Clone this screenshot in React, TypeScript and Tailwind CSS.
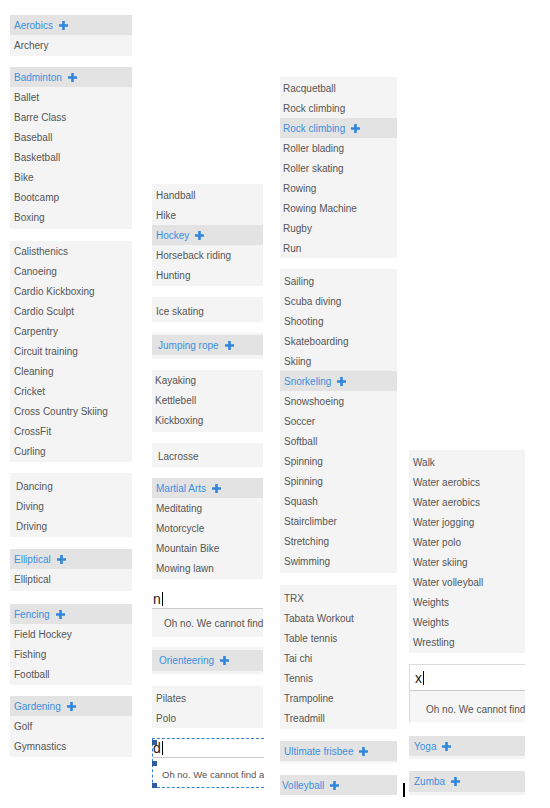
import React from "react";

const Plus = () => (
  <svg width="9" height="9" viewBox="0 0 9 9" className="shrink-0">
    <path
      d="M3.2 0h2.6v3.2H9v2.6H5.8V9H3.2V5.8H0V3.2h3.2z"
      fill="#2f86dc"
    />
  </svg>
);

const Item = ({ children, className = "px-1" }: { children: React.ReactNode; className?: string }) => (
  <div className={`flex h-5 items-center whitespace-nowrap text-[#555] ${className}`}>{children}</div>
);

const Head = ({ children, className = "px-1" }: { children: React.ReactNode; className?: string }) => (
  <div className={`flex h-5 items-center gap-[6px] whitespace-nowrap bg-[#e3e3e3] text-[#3b8fe0] ${className}`}>
    {children}
    <Plus />
  </div>
);

const Caret = () => <span className="ml-[1px] inline-block h-[14px] w-px bg-black" />;

export default function App() {
  return (
    <div className="flex h-[808px] w-[550px] overflow-hidden bg-white pl-[10px] font-['Liberation_Sans',Arial,sans-serif] text-[10px]">
      {/* COLUMN 1 */}
      <div className="flex w-[122px] flex-col">
        <div className="mt-[15px] bg-[#f4f4f4] pb-px">
          <Head>Aerobics</Head>
          <Item>Archery</Item>
        </div>
        <div className="mt-[11px] bg-[#f4f4f4] pb-[2px]">
          <Head>Badminton</Head>
          {["Ballet", "Barre Class", "Baseball", "Basketball", "Bike", "Bootcamp", "Boxing"].map((t) => (
            <Item key={t}>{t}</Item>
          ))}
        </div>
        <div className="mt-[12px] bg-[#f4f4f4] pb-px">
          {[
            "Calisthenics",
            "Canoeing",
            "Cardio Kickboxing",
            "Cardio Sculpt",
            "Carpentry",
            "Circuit training",
            "Cleaning",
            "Cricket",
            "Cross Country Skiing",
            "CrossFit",
            "Curling",
          ].map((t) => (
            <Item key={t}>{t}</Item>
          ))}
        </div>
        <div className="mt-[11px] bg-[#f4f4f4] pt-[3px] pb-px">
          {["Dancing", "Diving", "Driving"].map((t) => (
            <Item key={t} className="px-[6px]">{t}</Item>
          ))}
        </div>
        <div className="mt-[12px] bg-[#f4f4f4] pb-[2px]">
          <Head>Elliptical</Head>
          <Item>Elliptical</Item>
        </div>
        <div className="mt-[13px] bg-[#f4f4f4] pb-px">
          <Head>Fencing</Head>
          {["Field Hockey", "Fishing", "Football"].map((t) => (
            <Item key={t}>{t}</Item>
          ))}
        </div>
        <div className="mt-[11px] bg-[#f4f4f4] pb-px">
          <Head>Gardening</Head>
          <Item>Golf</Item>
          <Item>Gymnastics</Item>
        </div>
      </div>

      {/* COLUMN 2 */}
      <div className="ml-[20px] flex w-[111px] flex-col">
        <div className="mt-[184px] bg-[#f4f4f4] pt-px pb-px">
          <Item>Handball</Item>
          <Item>Hike</Item>
          <Head>Hockey</Head>
          <Item>Horseback riding</Item>
          <Item>Hunting</Item>
        </div>
        <div className="mt-[11px] bg-[#f4f4f4] pt-[4px] pb-px">
          <Item>Ice skating</Item>
        </div>
        <div className="mt-[11px] bg-[#f4f4f4] pt-[2px] pb-[4px]">
          <Head className="px-[6px]">Jumping rope</Head>
        </div>
        <div className="mt-[11px] bg-[#f4f4f4] pb-[2px]">
          {["Kayaking", "Kettlebell", "Kickboxing"].map((t) => (
            <Item key={t} className="px-[3px]">{t}</Item>
          ))}
        </div>
        <div className="mt-[11px] bg-[#f4f4f4] pt-[3px] pb-px">
          <Item className="px-[6px]">Lacrosse</Item>
        </div>
        <div className="mt-[11px] bg-[#f4f4f4] pb-px">
          <Head>Martial Arts</Head>
          {["Meditating", "Motorcycle", "Mountain Bike", "Mowing lawn"].map((t) => (
            <Item key={t}>{t}</Item>
          ))}
        </div>
        {/* SEARCH n */}
        <div className="mt-[9px] overflow-hidden">
          <div className="flex h-[21px] items-center border-b border-[#c9c9c9] bg-white pl-px pt-px text-[14px] leading-none text-[#222]">
            n<Caret />
          </div>
          <div className="flex h-[28px] items-center whitespace-nowrap bg-[#f4f4f4] pl-[12px] text-[#555]">
            Oh no. We cannot find
          </div>
        </div>
        <div className="mt-[10px] bg-[#f4f4f4] pt-[3px] pb-[3px]">
          <Head className="h-[21px] px-[7px]">Orienteering</Head>
        </div>
        <div className="mt-[12px] bg-[#f4f4f4] pt-[2px]">
          <Item>Pilates</Item>
          <Item>Polo</Item>
        </div>
        {/* SELECTED SEARCH d */}
        <div className="relative mt-[10px] h-[50px] w-[112px] border-y border-l border-dashed border-[#3b7fd4]">
          <div className="overflow-hidden">
            <div className="flex h-[19px] items-center border-b border-[#c9c9c9] bg-white text-[14px] leading-none text-[#222]">
              d<Caret />
            </div>
            <div className="flex h-[29px] items-center whitespace-nowrap bg-white pt-[5px] pl-[9px] text-[9.5px] text-[#555]">
              Oh no. We cannot find a
            </div>
          </div>
          <span className="absolute left-[-1px] top-[1px] h-[5px] w-[5px] bg-[#2d5d9c]" />
          <span className="absolute left-[-1px] top-[22px] h-[5px] w-[5px] bg-[#2d5d9c]" />
          <span className="absolute left-[-1px] top-[44px] h-[5px] w-[5px] bg-[#2d5d9c]" />
        </div>
      </div>

      {/* COLUMN 3 */}
      <div className="ml-[17px] flex w-[117px] flex-col">
        <div className="mt-[77px] bg-[#f4f4f4] pt-px">
          <Item className="px-[3px]">Racquetball</Item>
          <Item className="px-[3px]">Rock climbing</Item>
          <Head className="px-[3px]">Rock climbing</Head>
          {["Roller blading", "Roller skating", "Rowing", "Rowing Machine", "Rugby", "Run"].map((t) => (
            <Item key={t} className="px-[3px]">{t}</Item>
          ))}
        </div>
        <div className="mt-[11px] bg-[#f4f4f4] pt-[2px] pb-[2px]">
          {["Sailing", "Scuba diving", "Shooting", "Skateboarding", "Skiing"].map((t) => (
            <Item key={t} className="px-[4px]">{t}</Item>
          ))}
          <Head className="px-[4px]">Snorkeling</Head>
          {[
            "Snowshoeing",
            "Soccer",
            "Softball",
            "Spinning",
            "Spinning ",
            "Squash",
            "Stairclimber",
            "Stretching",
            "Swimming",
          ].map((t) => (
            <Item key={t} className="px-[4px]">{t}</Item>
          ))}
        </div>
        <div className="mt-[12px] bg-[#f4f4f4] pt-[3px] pb-px">
          {["TRX", "Tabata Workout", "Table tennis", "Tai chi", "Tennis", "Trampoline", "Treadmill"].map((t) => (
            <Item key={t} className="px-[4px]">{t}</Item>
          ))}
        </div>
        <div className="mt-[12px] bg-[#f4f4f4] pb-[2px]">
          <Head className="px-[4px]">Ultimate frisbee</Head>
        </div>
        <div className="mt-[12px] bg-[#f4f4f4]">
          <Head className="px-[2px]">Volleyball</Head>
        </div>
      </div>

      {/* COLUMN 4 */}
      <div className="ml-[12px] flex w-[116px] flex-col">
        <div className="mt-[450px] bg-[#f4f4f4] pt-[2px] pb-px">
          {[
            "Walk",
            "Water aerobics",
            "Water aerobics ",
            "Water jogging",
            "Water polo",
            "Water skiing",
            "Water volleyball",
            "Weights",
            "Weights ",
            "Wrestling",
          ].map((t) => (
            <Item key={t}>{t}</Item>
          ))}
        </div>
        {/* SEARCH x */}
        <div className="mt-[11px] overflow-hidden border-t border-l border-[#dcdcdc]">
          <div className="flex h-[26px] items-center border-b border-[#c9c9c9] bg-white pl-[5px] text-[14px] leading-none text-[#222]">
            x<Caret />
          </div>
          <div className="flex h-[31px] items-center whitespace-nowrap bg-[#f6f6f6] pt-[5px] pl-[16px] text-[#555]">
            Oh no. We cannot find
          </div>
        </div>
        <div className="mt-[14px] bg-[#f4f4f4] pb-[3px]">
          <Head className="px-[5px]">Yoga</Head>
        </div>
        <div className="relative mt-[12px] bg-[#f4f4f4] pb-[3px]">
          <Head className="h-[21px] px-[5px]">Zumba</Head>
          <span className="absolute left-[-6px] top-[12px] h-[14px] w-[2px] bg-black" />
        </div>
      </div>
    </div>
  );
}
